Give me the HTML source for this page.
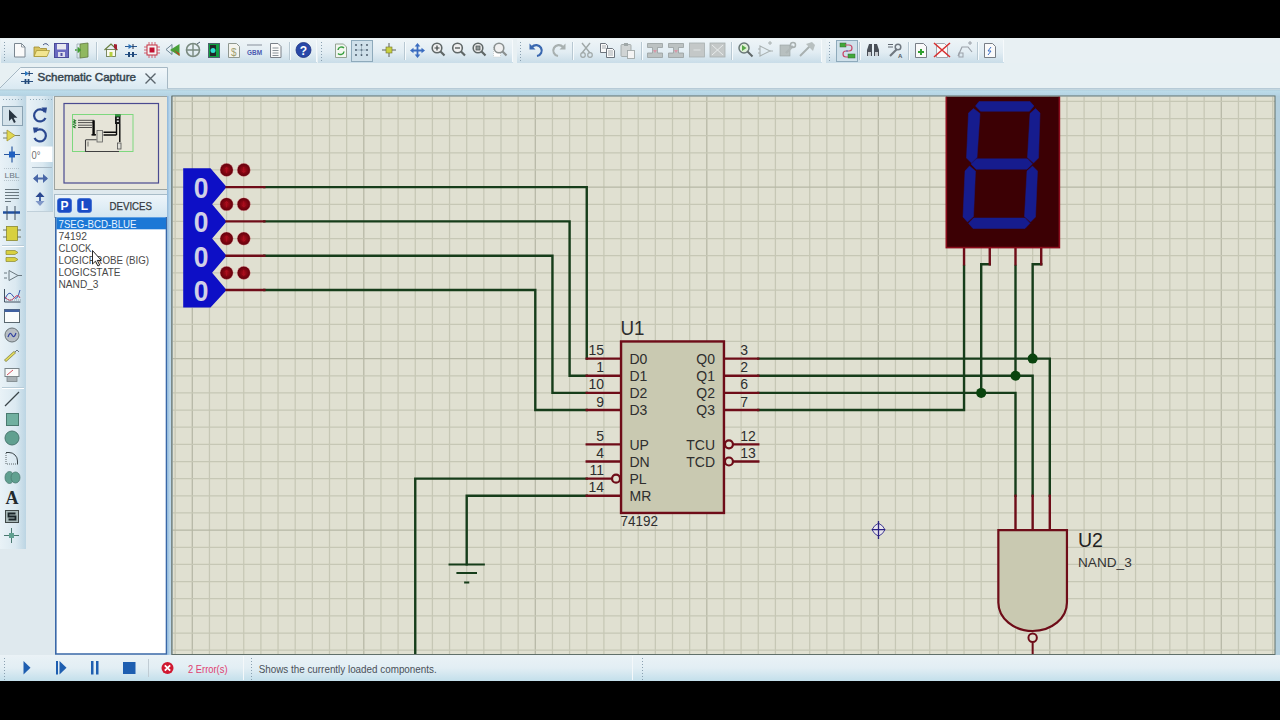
<!DOCTYPE html>
<html><head><meta charset="utf-8"><title>Schematic Capture</title>
<style>html,body{margin:0;padding:0;background:#000;overflow:hidden}svg text{font-family:"Liberation Sans",sans-serif}</style>
</head><body>
<svg width="1280" height="720" viewBox="0 0 1280 720" style="display:block">
<defs>
<linearGradient id="tbg" x1="0" y1="0" x2="0" y2="1"><stop offset="0" stop-color="#eef4f7"/><stop offset="0.55" stop-color="#e2edf3"/><stop offset="1" stop-color="#c9dde8"/></linearGradient>
<linearGradient id="tabg" x1="0" y1="0" x2="0" y2="1"><stop offset="0" stop-color="#f2f7fa"/><stop offset="1" stop-color="#d9e9f2"/></linearGradient>
<linearGradient id="col" x1="0" y1="0" x2="1" y2="0"><stop offset="0" stop-color="#e9f2f7"/><stop offset="0.6" stop-color="#dbe9f1"/><stop offset="1" stop-color="#bcd5e3"/></linearGradient>
<linearGradient id="sbg" x1="0" y1="0" x2="0" y2="1"><stop offset="0" stop-color="#eaf2f6"/><stop offset="0.5" stop-color="#e2eef4"/><stop offset="1" stop-color="#c3dfeb"/></linearGradient>
<linearGradient id="hdr" x1="0" y1="0" x2="0" y2="1"><stop offset="0" stop-color="#eef5fa"/><stop offset="1" stop-color="#d3e6f1"/></linearGradient>
<linearGradient id="vstrip" x1="0" y1="0" x2="1" y2="0"><stop offset="0" stop-color="#8fb6d8"/><stop offset="0.5" stop-color="#b8d6ec"/><stop offset="1" stop-color="#c4dce8"/></linearGradient>
<linearGradient id="band" x1="0" y1="0" x2="0" y2="1"><stop offset="0" stop-color="#9fbccb"/><stop offset="0.2" stop-color="#bcdcea"/><stop offset="1" stop-color="#b4d2e2"/></linearGradient>
<radialGradient id="dot" cx="0.5" cy="0.5" r="0.5"><stop offset="0" stop-color="#a80c1a"/><stop offset="0.6" stop-color="#7c0410"/><stop offset="1" stop-color="#60000c"/></radialGradient>
</defs>
<rect x="0" y="0" width="1280" height="720" fill="#000"/>
<rect x="0" y="38" width="1280" height="643" fill="#e7f0f3"/>
<rect x="0" y="38" width="1280" height="25" fill="#e8f0f3"/>
<rect x="1" y="39" width="316" height="24" fill="url(#tbg)"/>
<line x1="316.5" y1="40" x2="316.5" y2="62" stroke="#f6fafc" stroke-width="1"/>
<rect x="4" y="42" width="1" height="1" fill="#8aa0b0"/>
<rect x="4" y="45" width="1" height="1" fill="#8aa0b0"/>
<rect x="4" y="48" width="1" height="1" fill="#8aa0b0"/>
<rect x="4" y="51" width="1" height="1" fill="#8aa0b0"/>
<rect x="4" y="54" width="1" height="1" fill="#8aa0b0"/>
<rect x="4" y="57" width="1" height="1" fill="#8aa0b0"/>
<rect x="4" y="60" width="1" height="1" fill="#8aa0b0"/>
<rect x="318" y="39" width="195" height="24" fill="url(#tbg)"/>
<line x1="512.5" y1="40" x2="512.5" y2="62" stroke="#f6fafc" stroke-width="1"/>
<rect x="321" y="42" width="1" height="1" fill="#8aa0b0"/>
<rect x="321" y="45" width="1" height="1" fill="#8aa0b0"/>
<rect x="321" y="48" width="1" height="1" fill="#8aa0b0"/>
<rect x="321" y="51" width="1" height="1" fill="#8aa0b0"/>
<rect x="321" y="54" width="1" height="1" fill="#8aa0b0"/>
<rect x="321" y="57" width="1" height="1" fill="#8aa0b0"/>
<rect x="321" y="60" width="1" height="1" fill="#8aa0b0"/>
<rect x="517" y="39" width="305" height="24" fill="url(#tbg)"/>
<line x1="821.5" y1="40" x2="821.5" y2="62" stroke="#f6fafc" stroke-width="1"/>
<rect x="520" y="42" width="1" height="1" fill="#8aa0b0"/>
<rect x="520" y="45" width="1" height="1" fill="#8aa0b0"/>
<rect x="520" y="48" width="1" height="1" fill="#8aa0b0"/>
<rect x="520" y="51" width="1" height="1" fill="#8aa0b0"/>
<rect x="520" y="54" width="1" height="1" fill="#8aa0b0"/>
<rect x="520" y="57" width="1" height="1" fill="#8aa0b0"/>
<rect x="520" y="60" width="1" height="1" fill="#8aa0b0"/>
<rect x="826" y="39" width="178" height="24" fill="url(#tbg)"/>
<line x1="1003.5" y1="40" x2="1003.5" y2="62" stroke="#f6fafc" stroke-width="1"/>
<rect x="829" y="42" width="1" height="1" fill="#8aa0b0"/>
<rect x="829" y="45" width="1" height="1" fill="#8aa0b0"/>
<rect x="829" y="48" width="1" height="1" fill="#8aa0b0"/>
<rect x="829" y="51" width="1" height="1" fill="#8aa0b0"/>
<rect x="829" y="54" width="1" height="1" fill="#8aa0b0"/>
<rect x="829" y="57" width="1" height="1" fill="#8aa0b0"/>
<rect x="829" y="60" width="1" height="1" fill="#8aa0b0"/>
<line x1="96.5" y1="42" x2="96.5" y2="60" stroke="#b8c8d2" stroke-width="1"/>
<line x1="97.5" y1="42" x2="97.5" y2="60" stroke="#f6fbfd" stroke-width="1"/>
<line x1="289.5" y1="42" x2="289.5" y2="60" stroke="#b8c8d2" stroke-width="1"/>
<line x1="290.5" y1="42" x2="290.5" y2="60" stroke="#f6fbfd" stroke-width="1"/>
<line x1="404.5" y1="42" x2="404.5" y2="60" stroke="#b8c8d2" stroke-width="1"/>
<line x1="405.5" y1="42" x2="405.5" y2="60" stroke="#f6fbfd" stroke-width="1"/>
<line x1="572.5" y1="42" x2="572.5" y2="60" stroke="#b8c8d2" stroke-width="1"/>
<line x1="573.5" y1="42" x2="573.5" y2="60" stroke="#f6fbfd" stroke-width="1"/>
<line x1="641.5" y1="42" x2="641.5" y2="60" stroke="#b8c8d2" stroke-width="1"/>
<line x1="642.5" y1="42" x2="642.5" y2="60" stroke="#f6fbfd" stroke-width="1"/>
<line x1="731.5" y1="42" x2="731.5" y2="60" stroke="#b8c8d2" stroke-width="1"/>
<line x1="732.5" y1="42" x2="732.5" y2="60" stroke="#f6fbfd" stroke-width="1"/>
<line x1="859.5" y1="42" x2="859.5" y2="60" stroke="#b8c8d2" stroke-width="1"/>
<line x1="860.5" y1="42" x2="860.5" y2="60" stroke="#f6fbfd" stroke-width="1"/>
<line x1="908.5" y1="42" x2="908.5" y2="60" stroke="#b8c8d2" stroke-width="1"/>
<line x1="909.5" y1="42" x2="909.5" y2="60" stroke="#f6fbfd" stroke-width="1"/>
<line x1="977.5" y1="42" x2="977.5" y2="60" stroke="#b8c8d2" stroke-width="1"/>
<line x1="978.5" y1="42" x2="978.5" y2="60" stroke="#f6fbfd" stroke-width="1"/>
<path d="M14.5,43.5 h7 l3.5,3.5 v10 h-10.5z" fill="#fafafa" stroke="#7a8690" stroke-width="1"/>
<path d="M21.5,43.5 v3.5 h3.5" fill="none" stroke="#7a8690" stroke-width="0.8"/>
<path d="M34,47 h5 l1.5,1.5 h6 v8 h-12.5z" fill="#d8c460" stroke="#a08a30" stroke-width="0.8"/>
<path d="M34,56.5 l2.5,-6 h13 l-2.5,6z" fill="#f2e590" stroke="#a89838" stroke-width="0.8"/>
<path d="M43,45 q3,-3 5.5,0.5" fill="none" stroke="#405080" stroke-width="1"/>
<rect x="54.5" y="43.5" width="14" height="14" fill="#6a6ac0" stroke="#4a4a98" stroke-width="1"/>
<rect x="57" y="44" width="9" height="5.5" fill="#e8e8f0"/>
<rect x="58" y="52" width="7" height="5" fill="#dcdcec"/><rect x="60.5" y="53" width="2" height="3" fill="#5050a0"/>
<path d="M80,44 l8,-1 v14 l-8,1z" fill="#90b860" stroke="#607840" stroke-width="0.8"/>
<path d="M75,50 h5 m-2.5,-2.5 l2.5,2.5 l-2.5,2.5" fill="none" stroke="#40a030" stroke-width="1.6"/>
<path d="M80,44 h-3 v14 h3" fill="none" stroke="#9aa8b0" stroke-width="0.8"/>
<path d="M104.5,50 l6.5,-6 l6.5,6" fill="none" stroke="#6a8040" stroke-width="1.2"/>
<rect x="106.5" y="49.5" width="9" height="7" fill="#fafaf0" stroke="#607040" stroke-width="0.8"/>
<rect x="109.5" y="52" width="3" height="4.5" fill="#b8d040"/>
<path d="M114,44 v4 l3,2.5 v-6z" fill="#a02030"/>
<path d="M125,46.5 h12 M125,54.5 h12" stroke="#2a5890" stroke-width="1"/>
<path d="M128.5,44 v5 l4,-2.5z" fill="#2a70b8"/><path d="M133,44 v5" stroke="#203050" stroke-width="1"/>
<path d="M129,52 v5 M133,52 v5" stroke="#204878" stroke-width="2"/>
<rect x="147" y="45" width="10" height="10" fill="#f4f4f4" stroke="#c03040" stroke-width="1"/>
<rect x="149.5" y="47.5" width="5" height="5" fill="#c01030"/>
<path d="M144,47 h3 M144,50 h3 M144,53 h3 M157,47 h3 M157,50 h3 M157,53 h3 M149,42 v3 M152,42 v3 M155,42 v3 M149,55 v3 M152,55 v3 M155,55 v3" stroke="#d04050" stroke-width="0.8"/>
<path d="M166,49.5 l6,-5 v10z" fill="none" stroke="#607888" stroke-width="0.9"/>
<path d="M170,50 l9.5,-6 v12z" fill="#48a038"/><path d="M174,50 l5.5,3.5 v2.5z" fill="#c83a20"/>
<circle cx="193" cy="50" r="6.5" fill="none" stroke="#7a8a80" stroke-width="1.6"/>
<path d="M186,50 h14 M193,43 v14" stroke="#7a8a80" stroke-width="1.4"/>
<path d="M197,44 l3,-2" stroke="#506070" stroke-width="1"/>
<rect x="208.5" y="43.5" width="11" height="14" fill="#10a040" stroke="#506070" stroke-width="1"/>
<rect x="210" y="45" width="6" height="11" fill="#202828"/><circle cx="213" cy="50.5" r="2.5" fill="#30e0d0"/>
<path d="M228.5,43.5 h8 l3,3 v11 h-11z" fill="#f4f4ee" stroke="#909890" stroke-width="1"/>
<text x="231" y="55.5" font-size="10" fill="#a0a070" text-anchor="start" font-weight="normal" >$</text>
<rect x="247" y="44" width="15" height="2" fill="#b8c0c8"/>
<text x="247" y="55" font-size="6.5" fill="#4a5ab0" text-anchor="start" font-weight="bold" textLength="15" lengthAdjust="spacingAndGlyphs" >GBM</text>
<path d="M270.5,43.5 h7.5 l3,3 v11 h-10.5z" fill="#fafafa" stroke="#7a8088" stroke-width="1"/>
<path d="M272.5,48 h6 M272.5,50.5 h6 M272.5,53 h6 M272.5,55.5 h6" stroke="#707880" stroke-width="0.8"/>
<circle cx="303.5" cy="50" r="7.5" fill="#2848a8"/><circle cx="303.5" cy="50" r="7.5" fill="none" stroke="#1a3080" stroke-width="0.8"/>
<text x="303.5" y="54.5" font-size="12" fill="#ffffff" text-anchor="middle" font-weight="bold" >?</text>
<path d="M335.5,44 h8 l3,3 v10.5 h-11z" fill="#f2f6f0" stroke="#8a9a88" stroke-width="0.9"/>
<path d="M338,50 a3.5,3.5 0 0 1 6,-2 M344,51.5 a3.5,3.5 0 0 1 -6,2" fill="none" stroke="#38a040" stroke-width="1.5"/>
<rect x="351.5" y="40.5" width="21" height="21" fill="#cfe0ea" stroke="#8eaabb" stroke-width="1"/>
<circle cx="356" cy="45" r="0.9" fill="#405060"/>
<circle cx="361.5" cy="45" r="0.9" fill="#405060"/>
<circle cx="367" cy="45" r="0.9" fill="#405060"/>
<circle cx="356" cy="50" r="0.9" fill="#405060"/>
<circle cx="361.5" cy="50" r="0.9" fill="#405060"/>
<circle cx="367" cy="50" r="0.9" fill="#405060"/>
<circle cx="356" cy="55" r="0.9" fill="#405060"/>
<circle cx="361.5" cy="55" r="0.9" fill="#405060"/>
<circle cx="367" cy="55" r="0.9" fill="#405060"/>
<path d="M356,50 h11 M361.5,45 v10" stroke="#7890a0" stroke-width="0.5"/>
<path d="M382,50 h14 M389,43 v14" stroke="#505040" stroke-width="0.9"/><rect x="386" y="47" width="6" height="6" fill="#c8d040" stroke="#707030" stroke-width="0.6"/>
<path d="M417.5,46 v9 M413,50.5 h9" stroke="#3a6cc0" stroke-width="1.8"/><path d="M417.5,43 l-2.8,3.5 h5.6z M417.5,58 l-2.8,-3.5 h5.6z M410,50.5 l3.5,-2.8 v5.6z M425,50.5 l-3.5,-2.8 v5.6z" fill="#3a6cc0"/>
<circle cx="437" cy="48" r="4.8" fill="#f0f0f0" stroke="#606868" stroke-width="1.6"/>
<path d="M440.3,51.3 l4.2,4.2" stroke="#606868" stroke-width="2.2"/>
<path d="M434.5,48 h5 M437,45.5 v5" stroke="#404848" stroke-width="1.2"/>
<circle cx="457.5" cy="48" r="4.8" fill="#f0f0f0" stroke="#606868" stroke-width="1.6"/>
<path d="M460.8,51.3 l4.2,4.2" stroke="#606868" stroke-width="2.2"/>
<path d="M455.0,48 h5" stroke="#404848" stroke-width="1.2"/>
<circle cx="478" cy="48" r="4.8" fill="#f0f0f0" stroke="#606868" stroke-width="1.6"/>
<path d="M481.3,51.3 l4.2,4.2" stroke="#606868" stroke-width="2.2"/>
<rect x="476" y="46" width="4" height="4" fill="#909898" stroke="#505858" stroke-width="0.8"/>
<rect x="493.5" y="46" width="7" height="11" fill="#ffffff" stroke="#c0c8c8" stroke-dasharray="1,1" stroke-width="0.8"/>
<circle cx="499" cy="48" r="4.8" fill="#f0f0f0" stroke="#8a9090" stroke-width="1.6"/>
<path d="M502.3,51.3 l4.2,4.2" stroke="#8a9090" stroke-width="2.2"/>
<path d="M532,47 a5.5,5.5 0 1 1 5,9" fill="none" stroke="#3a68b0" stroke-width="2.2"/><path d="M529.5,43.5 v6 h6z" fill="#3a68b0"/>
<path d="M563,47 a5.5,5.5 0 1 0 -5,9" fill="none" stroke="#a8b0b0" stroke-width="2.2"/><path d="M565.5,43.5 v6 h-6z" fill="#a8b0b0"/>
<path d="M582,43 l8,10 M590,43 l-8,10" stroke="#a0a8a8" stroke-width="1.4"/><circle cx="583" cy="55" r="2.3" fill="none" stroke="#a0a8a8" stroke-width="1.2"/><circle cx="590" cy="55" r="2.3" fill="none" stroke="#a0a8a8" stroke-width="1.2"/>
<path d="M600.5,43.5 h5 l2,2 v7 h-7z" fill="#fafafa" stroke="#606870" stroke-width="0.9"/><path d="M606.5,48.5 h6 l2,2 v7 h-8z" fill="#fafafa" stroke="#606870" stroke-width="0.9"/>
<path d="M608,51 h5 M608,53 h5 M608,55 h5 M602,46 h4 M602,48 h4" stroke="#707880" stroke-width="0.6"/>
<rect x="621" y="44.5" width="10" height="12" rx="1" fill="#d0d4d4" stroke="#a0a8a8" stroke-width="0.9"/><rect x="624" y="43" width="4" height="3" fill="#a0a8a8"/><rect x="627.5" y="50.5" width="7" height="8" fill="#f4f4f4" stroke="#a0a8a8" stroke-width="0.9"/>
<path d="M647.5,43.5 h15 v4 h-5 v5.5 h5 v4.5 h-15 v-4.5 h5 v-5.5 h-5z" fill="#bcc2c2" stroke="#98a0a0" stroke-width="0.8"/>
<path d="M653.0,50 l2,3 l2,-3z" fill="#d898a8"/>
<path d="M668.5,43.5 h15 v4 h-5 v5.5 h5 v4.5 h-15 v-4.5 h5 v-5.5 h-5z" fill="#bcc2c2" stroke="#98a0a0" stroke-width="0.8"/>
<path d="M674.0,50 l2,3 l2,-3z" fill="#d898a8"/>
<rect x="689.5" y="43" width="15" height="14" fill="#c4c8c8" stroke="#a8b0b0" stroke-width="0.8"/><path d="M693.5,50 h7" stroke="#e0e4e4" stroke-width="1"/>
<rect x="710" y="43" width="15" height="14" fill="#c4c8c8" stroke="#a8b0b0" stroke-width="0.8"/><path d="M712,45 l11,10 M723,45 l-11,10" stroke="#e8ecec" stroke-width="1"/>
<circle cx="744" cy="48" r="5" fill="#e0f0d8" stroke="#6a7878" stroke-width="1.5"/><path d="M742,45 l4.5,3 l-4.5,3z" fill="#58a848"/><path d="M747.5,51.5 l5,5" stroke="#606868" stroke-width="2"/>
<path d="M760,46 l10,5 l-10,5z" fill="none" stroke="#a8b0b0" stroke-width="1.1"/><path d="M758,49 h2 M758,53 h2 M770,51 h3 M768,43 h4 M770,41 v4" stroke="#a8b0b0" stroke-width="1"/>
<rect x="780" y="45" width="10" height="11" fill="#b8c0c0" stroke="#98a0a0" stroke-width="0.6"/><path d="M786,53 l7,-7" stroke="#b0b8b8" stroke-width="2.4"/><circle cx="793" cy="45" r="2.5" fill="none" stroke="#a8b0b0" stroke-width="1.5"/>
<path d="M800,56 l10,-10" stroke="#a8b0b0" stroke-width="2"/><path d="M806,44 l6,-2 l3,3 l-2,6z" fill="#b8c0c0"/>
<rect x="836.5" y="40.5" width="21" height="21" fill="#cfe0ea" stroke="#8eaabb" stroke-width="1"/>
<rect x="840" y="43" width="6" height="4" fill="#40a838" stroke="#306830" stroke-width="0.5"/><rect x="848" y="54" width="7" height="4" fill="#40a838" stroke="#306830" stroke-width="0.5"/>
<path d="M845,45 h4 a3,3 0 0 1 0,6 h-3 a3,3 0 0 0 0,6 h2" fill="none" stroke="#c84868" stroke-width="1.2"/><path d="M846,51 h2" stroke="#5a68b8" stroke-width="1.2"/>
<path d="M867,56 v-6 l2,-6 h3 v12z M874,56 v-12 h3 l2,6 v6z" fill="#4a5058"/><rect x="868" y="52" width="3" height="4" fill="#c8ccd0"/><rect x="875" y="52" width="3" height="4" fill="#c8ccd0"/>
<path d="M888,44.5 h5 M888,47 h5" stroke="#606870" stroke-width="1"/><path d="M890,56 l7,-7" stroke="#707880" stroke-width="2.2"/><circle cx="898" cy="47" r="2.8" fill="none" stroke="#707880" stroke-width="1.5"/>
<text x="898" y="57.5" font-size="6" fill="#505860" text-anchor="start" font-weight="bold" >A</text>
<path d="M915.5,43.5 h8 l3,3 v11 h-11z" fill="#fafafa" stroke="#6a7078" stroke-width="0.9"/><path d="M918,52 h6 M921,49 v6" stroke="#30a030" stroke-width="2"/>
<path d="M936.5,43.5 h8 l3,3 v11 h-11z" fill="#fafafa" stroke="#9aa0a8" stroke-width="0.9"/><path d="M934,43 l16,14 M950,43 l-16,14" stroke="#d83030" stroke-width="1.6"/>
<path d="M958,56 l4,-9 h6 l4,5" fill="none" stroke="#9aa0a8" stroke-width="1.2"/><rect x="959" y="53" width="4" height="4" fill="none" stroke="#9aa0a8"/><path d="M968,43 h4 M970,41 v4" stroke="#9aa0a8" stroke-width="1"/>
<path d="M984.5,43.5 h8 l3,3 v11 h-11z" fill="#fafafa" stroke="#6a7078" stroke-width="0.9"/><path d="M991,47 l-3,4 h3 l-3,4" fill="none" stroke="#3a70c8" stroke-width="1"/>
<rect x="0" y="63" width="1280" height="27" fill="#e7f0f3"/>
<path d="M0,88.5 L20.5,67.5 H167.5 V89 H0z" fill="url(#tabg)"/>
<path d="M0,88 L20.5,67.5 H167.5 V89" fill="none" stroke="#a6b8c4" stroke-width="1"/>
<path d="M167.5,88.5 H1280" stroke="#b6cad6" stroke-width="1"/>
<path d="M21,73.5 h12 M21,81.5 h12" stroke="#2a5080" stroke-width="1"/>
<path d="M25,71 v5 l4,-2.5z" fill="#2a78c0"/><path d="M29.2,71 v5" stroke="#203050" stroke-width="1"/>
<path d="M25.5,79 v5 M28.5,79 v5" stroke="#204878" stroke-width="1.8"/>
<text x="37.5" y="81.4" font-size="11.3" fill="#36444e" text-anchor="start" font-weight="normal" textLength="98.5" lengthAdjust="spacingAndGlyphs" stroke="#36444e" stroke-width="0.45">Schematic Capture</text>
<path d="M145.5,73.5 l10,10 M155.5,73.5 l-10,10" stroke="#5a646c" stroke-width="1.4"/>
<rect x="0" y="89.5" width="1280" height="6.5" fill="url(#band)"/>
<rect x="0" y="96" width="172" height="559" fill="#dfe9ee"/>
<rect x="0" y="96" width="26" height="453" fill="url(#col)"/>
<rect x="27" y="96" width="26" height="115" fill="url(#col)"/>
<line x1="27" y1="211.5" x2="53" y2="211.5" stroke="#c0d0da" stroke-width="1"/>
<rect x="3" y="99" width="1" height="1" fill="#90a8b8"/>
<rect x="6" y="99" width="1" height="1" fill="#90a8b8"/>
<rect x="9" y="99" width="1" height="1" fill="#90a8b8"/>
<rect x="12" y="99" width="1" height="1" fill="#90a8b8"/>
<rect x="15" y="99" width="1" height="1" fill="#90a8b8"/>
<rect x="18" y="99" width="1" height="1" fill="#90a8b8"/>
<rect x="21" y="99" width="1" height="1" fill="#90a8b8"/>
<rect x="30" y="99" width="1" height="1" fill="#90a8b8"/>
<rect x="33" y="99" width="1" height="1" fill="#90a8b8"/>
<rect x="36" y="99" width="1" height="1" fill="#90a8b8"/>
<rect x="39" y="99" width="1" height="1" fill="#90a8b8"/>
<rect x="42" y="99" width="1" height="1" fill="#90a8b8"/>
<rect x="45" y="99" width="1" height="1" fill="#90a8b8"/>
<rect x="48" y="99" width="1" height="1" fill="#90a8b8"/>
<rect x="51" y="99" width="1" height="1" fill="#90a8b8"/>
<rect x="2.5" y="106.5" width="20" height="19" fill="#d4e2ea" stroke="#8aa2b2" stroke-width="1"/>
<path d="M9,109.5 v11.5 l2.8,-2.6 l2.2,4.6 l1.8,-0.9 l-2.2,-4.4 h3.8z" fill="#283440"/>
<path d="M7,130 v11 l8,-5.5z" fill="#e0d850" stroke="#a89830" stroke-width="0.8"/><path d="M3,133 h4 M3,138 h4 M15,135.5 h5" stroke="#707860" stroke-width="0.9"/>
<path d="M4,154.5 h16 M12,146.5 v16" stroke="#2a58a0" stroke-width="1.2"/><rect x="9" y="151.5" width="6" height="6" fill="#2060c0"/>
<text x="4.5" y="178" font-size="8" fill="#6a7680" text-anchor="start" font-weight="normal" textLength="15" lengthAdjust="spacingAndGlyphs" >LBL</text>
<path d="M4,168.5 h16 M4,180.5 h16" stroke="#9aa8b0" stroke-width="0.6" stroke-dasharray="1,1"/>
<path d="M5,189.5 h14 M5,192.5 h14 M5,195.5 h14 M5,198.5 h14 M5,201.5 h6" stroke="#6a7880" stroke-width="1"/>
<path d="M3,212.5 h17" stroke="#2050a0" stroke-width="2.5"/><path d="M7,206 v14 M15,206 v14" stroke="#405060" stroke-width="1"/>
<rect x="6.5" y="226.5" width="11" height="14" fill="#d8d040" stroke="#8a8830" stroke-width="0.8"/><path d="M3,230 h3.5 M3,237 h3.5 M17.5,230 h3.5 M17.5,237 h3.5" stroke="#606850" stroke-width="0.9"/>
<line x1="2" y1="246.5" x2="24" y2="246.5" stroke="#ffffff" stroke-width="1"/><line x1="2" y1="245.5" x2="24" y2="245.5" stroke="#b8ccd8" stroke-width="1"/>
<path d="M6,250.5 h9 l3,2 l-3,2 h-9z M6,257.5 h9 l3,2 l-3,2 h-9z" fill="#d8d040" stroke="#8a8830" stroke-width="0.7"/>
<path d="M9,270.5 l9,5 l-9,5z" fill="none" stroke="#6a7880" stroke-width="1"/><path d="M4,273 h3 M4,278 h3 M18,275.5 h4" stroke="#6a7880" stroke-width="1"/>
<path d="M4.5,289 v13 h16" fill="none" stroke="#405060" stroke-width="1"/><path d="M5,299 q4,-10 8,-3 t7,-6" fill="none" stroke="#3a5ab0" stroke-width="1"/><path d="M5,297 q5,6 9,1 t6,0" fill="none" stroke="#c84060" stroke-width="1"/>
<path d="M4,300 h17" stroke="#6a7880" stroke-width="0.6" stroke-dasharray="1,1"/>
<rect x="4.5" y="309.5" width="15" height="13" fill="#fafcfc" stroke="#5a6870" stroke-width="1"/><rect x="4.5" y="309.5" width="15" height="2.5" fill="#4060a0"/>
<circle cx="12" cy="335" r="7" fill="#b8bec4" stroke="#6a7478" stroke-width="1"/><path d="M8,337 q2,-6 4,-2 t4,-2" fill="none" stroke="#3040a0" stroke-width="1.2"/>
<path d="M5,361 l10,-9" stroke="#888848" stroke-width="3"/><path d="M5.5,360.5 l9,-8" stroke="#e8e060" stroke-width="1.6"/><path d="M15,352 l2,-2 l2,2" fill="none" stroke="#505a60" stroke-width="0.8"/>
<rect x="5" y="368.5" width="14" height="8" fill="#f8fafa" stroke="#7a8488" stroke-width="1"/><path d="M7,375 l6,-5" stroke="#d04050" stroke-width="0.9"/><rect x="7" y="376.5" width="10" height="5" fill="#a8b0b4" stroke="#7a8488" stroke-width="0.8"/>
<line x1="2" y1="387.5" x2="24" y2="387.5" stroke="#b8ccd8" stroke-width="1"/><line x1="2" y1="388.5" x2="24" y2="388.5" stroke="#ffffff" stroke-width="1"/>
<path d="M5,406 l14,-14" stroke="#3a4448" stroke-width="1.2"/>
<rect x="6.5" y="413.5" width="12" height="12" fill="#70b0a0" stroke="#4a7a70" stroke-width="1"/>
<circle cx="12" cy="438" r="7" fill="#60a090" stroke="#4a7870" stroke-width="1"/>
<path d="M6,452.5 h3 a8.5,8.5 0 0 1 8.5,8.5 v3.5" fill="none" stroke="#3a4448" stroke-width="1"/><path d="M6,453 v11 h11" fill="none" stroke="#3a4448" stroke-width="0.8" stroke-dasharray="1,1"/>
<ellipse cx="9.5" cy="477.5" rx="4.5" ry="6" fill="#60a090" stroke="#4a7870" stroke-width="0.8"/><ellipse cx="15.5" cy="477.5" rx="4.5" ry="5.5" fill="#60a090" stroke="#4a7870" stroke-width="0.8"/>
<text x="12" y="503.5" font-size="18" fill="#222a2e" text-anchor="middle" font-weight="bold" style="font-family:'Liberation Serif',serif">A</text>
<rect x="5.5" y="510.5" width="13" height="12" fill="#a8b8b8" stroke="#404848" stroke-width="1"/>
<path d="M15.5,513.5 h-7 v3 h7 v3 h-7" fill="none" stroke="#1a2428" stroke-width="1.8"/>
<path d="M4,535.5 h15 M11.5,528 v15" stroke="#4a7870" stroke-width="1"/><rect x="9" y="533" width="5" height="5" fill="#60a090"/>
<path d="M45,112 a6,6 0 1 0 0.5,6" fill="none" stroke="#2a4890" stroke-width="2.2"/><path d="M41.5,107.5 l5.5,0 l-1,6z" fill="#2a4890"/>
<path d="M35,132 a6,6 0 1 1 -0.5,6" fill="none" stroke="#2a4890" stroke-width="2.2"/><path d="M38.5,127.5 l-5.5,0 l1,6z" fill="#2a4890"/>
<rect x="31" y="146.5" width="21.5" height="15.5" fill="#ffffff"/>
<text x="31.5" y="159" font-size="11" fill="#707070" text-anchor="start" font-weight="normal" textLength="9" lengthAdjust="spacingAndGlyphs" >0°</text>
<line x1="32" y1="167.5" x2="52" y2="167.5" stroke="#a8b8c4" stroke-width="1"/>
<path d="M34,178.5 h13" stroke="#4a68a8" stroke-width="2"/><path d="M33,178.5 l5,-4.5 v9z M48,178.5 l-5,-4.5 v9z" fill="#4a68a8"/>
<path d="M40,194 v10" stroke="#4a68a8" stroke-width="2"/><path d="M40,192 l-4.5,5 h9z" fill="#2a4890"/><path d="M40,206 l-4.5,-5 h9z" fill="#8098c8"/>
<rect x="54.5" y="96.5" width="113" height="93" fill="#e9e7dc" stroke="#9ea4a0" stroke-width="1"/>
<rect x="64" y="103.5" width="94.5" height="79.5" fill="#e6e4d8" stroke="#4a4a90" stroke-width="1.2"/>
<rect x="72.5" y="114.5" width="60.5" height="37" fill="none" stroke="#7ed87e" stroke-width="1"/>
<path d="M73.5,119.5 l2,1.2 l-2,1.2 l2,1.2 l-2,1.2 l2,1.2 l-2,1.2 l2,1.2" fill="none" stroke="#2a7a30" stroke-width="1.2"/>
<path d="M78,120.3 h16 M78,122.6 h15 M78,125.2 h14 M78,127.5 h14" stroke="#404040" stroke-width="0.9"/>
<path d="M93.6,120.3 v15" stroke="#080808" stroke-width="2.4"/><path d="M91.5,134.8 h4.5" stroke="#101010" stroke-width="1.5"/>
<rect x="97" y="130.5" width="5.5" height="11.5" fill="#dcdcd0" stroke="#606060" stroke-width="0.8"/>
<path d="M103.5,132.3 h13 M103.5,135 h13" stroke="#080808" stroke-width="1.5"/>
<rect x="115" y="114.5" width="5.5" height="9.5" fill="#181818"/><rect x="115" y="114.5" width="5.5" height="2" fill="#30a040"/><rect x="116.8" y="117.5" width="2" height="1.5" fill="#e0e0e0"/><rect x="116.8" y="120.5" width="2" height="1.5" fill="#e0e0e0"/>
<path d="M116.5,124 v11 M119.8,124 v12 M119.8,136 v6" stroke="#080808" stroke-width="1.4"/>
<rect x="117.5" y="143" width="3.5" height="6" fill="#e0e0d8" stroke="#505050" stroke-width="0.8"/>
<path d="M85.5,140 v11.5 h33.5 M85.5,139.7 h11" fill="none" stroke="#404040" stroke-width="1.1"/><path d="M88,141.5 v5" stroke="#505050" stroke-width="0.8"/>
<rect x="54.5" y="194.5" width="113" height="23" fill="url(#hdr)" stroke="#a8bcc8" stroke-width="1"/>
<rect x="57.5" y="198.5" width="14" height="14" rx="2.5" fill="#1a4cc6" stroke="#3a6ad0" stroke-width="0.8"/>
<text x="64.5" y="210" font-size="12" fill="#ffffff" text-anchor="middle" font-weight="bold" >P</text>
<rect x="77.5" y="198.5" width="14" height="14" rx="2.5" fill="#1a4cc6" stroke="#3a6ad0" stroke-width="0.8"/>
<text x="84.5" y="210" font-size="12" fill="#ffffff" text-anchor="middle" font-weight="bold" >L</text>
<text x="109.5" y="210" font-size="11" fill="#343a40" text-anchor="start" font-weight="normal" textLength="42.5" lengthAdjust="spacingAndGlyphs" stroke="#343a40" stroke-width="0.25">DEVICES</text>
<rect x="55" y="217" width="112" height="437.5" fill="#ffffff"/>
<path d="M55.8,217 V654 H166.5 V217" fill="none" stroke="#3a68a8" stroke-width="1.6"/>
<rect x="56.5" y="217.3" width="109.5" height="12" fill="#1c78d6"/>
<text x="58.5" y="227.5" font-size="11" fill="#e8f4ff" text-anchor="start" font-weight="normal" textLength="78" lengthAdjust="spacingAndGlyphs" >7SEG-BCD-BLUE</text>
<text x="58.5" y="239.8" font-size="11" fill="#4a4a4a" text-anchor="start" font-weight="normal" textLength="28.5" lengthAdjust="spacingAndGlyphs" >74192</text>
<text x="58.5" y="251.9" font-size="11" fill="#4a4a4a" text-anchor="start" font-weight="normal" textLength="33" lengthAdjust="spacingAndGlyphs" >CLOCK</text>
<text x="58.5" y="264" font-size="11" fill="#4a4a4a" text-anchor="start" font-weight="normal" textLength="90.5" lengthAdjust="spacingAndGlyphs" >LOGICPROBE (BIG)</text>
<text x="58.5" y="276.1" font-size="11" fill="#4a4a4a" text-anchor="start" font-weight="normal" textLength="62" lengthAdjust="spacingAndGlyphs" >LOGICSTATE</text>
<text x="58.5" y="288.2" font-size="11" fill="#4a4a4a" text-anchor="start" font-weight="normal" textLength="40" lengthAdjust="spacingAndGlyphs" >NAND_3</text>
<path d="M92.5,250.5 v13.5 l3,-2.8 l2.4,4.8 l1.8,-0.9 l-2.4,-4.7 h4z" fill="#ffffff" stroke="#101010" stroke-width="0.9"/>
<rect x="167" y="96" width="5.5" height="559" fill="url(#vstrip)"/>
<rect x="171" y="96" width="1.2" height="559" fill="#98a4a8"/>
<rect x="1275" y="96" width="5" height="559" fill="#b4d0de"/>
<svg x="172.5" y="96.5" width="1102.5" height="558.0" viewBox="172.5 96.5 1102.5 558.0" overflow="hidden">
<rect x="172.5" y="96.5" width="1102.5" height="558.0" fill="#e0e0d1"/>
<line x1="175.15" y1="96.5" x2="175.15" y2="654.5" stroke="#c6c7b5" stroke-width="1.25"/>
<line x1="192.3" y1="96.5" x2="192.3" y2="654.5" stroke="#b6b7a5" stroke-width="1.25"/>
<line x1="209.45" y1="96.5" x2="209.45" y2="654.5" stroke="#c6c7b5" stroke-width="1.25"/>
<line x1="226.6" y1="96.5" x2="226.6" y2="654.5" stroke="#c6c7b5" stroke-width="1.25"/>
<line x1="243.75" y1="96.5" x2="243.75" y2="654.5" stroke="#c6c7b5" stroke-width="1.25"/>
<line x1="260.9" y1="96.5" x2="260.9" y2="654.5" stroke="#c6c7b5" stroke-width="1.25"/>
<line x1="278.05" y1="96.5" x2="278.05" y2="654.5" stroke="#c6c7b5" stroke-width="1.25"/>
<line x1="295.2" y1="96.5" x2="295.2" y2="654.5" stroke="#c6c7b5" stroke-width="1.25"/>
<line x1="312.35" y1="96.5" x2="312.35" y2="654.5" stroke="#c6c7b5" stroke-width="1.25"/>
<line x1="329.5" y1="96.5" x2="329.5" y2="654.5" stroke="#c6c7b5" stroke-width="1.25"/>
<line x1="346.65" y1="96.5" x2="346.65" y2="654.5" stroke="#c6c7b5" stroke-width="1.25"/>
<line x1="363.8" y1="96.5" x2="363.8" y2="654.5" stroke="#b6b7a5" stroke-width="1.25"/>
<line x1="380.95" y1="96.5" x2="380.95" y2="654.5" stroke="#c6c7b5" stroke-width="1.25"/>
<line x1="398.1" y1="96.5" x2="398.1" y2="654.5" stroke="#c6c7b5" stroke-width="1.25"/>
<line x1="415.25" y1="96.5" x2="415.25" y2="654.5" stroke="#c6c7b5" stroke-width="1.25"/>
<line x1="432.4" y1="96.5" x2="432.4" y2="654.5" stroke="#c6c7b5" stroke-width="1.25"/>
<line x1="449.55" y1="96.5" x2="449.55" y2="654.5" stroke="#c6c7b5" stroke-width="1.25"/>
<line x1="466.7" y1="96.5" x2="466.7" y2="654.5" stroke="#c6c7b5" stroke-width="1.25"/>
<line x1="483.85" y1="96.5" x2="483.85" y2="654.5" stroke="#c6c7b5" stroke-width="1.25"/>
<line x1="501" y1="96.5" x2="501" y2="654.5" stroke="#c6c7b5" stroke-width="1.25"/>
<line x1="518.15" y1="96.5" x2="518.15" y2="654.5" stroke="#c6c7b5" stroke-width="1.25"/>
<line x1="535.3" y1="96.5" x2="535.3" y2="654.5" stroke="#b6b7a5" stroke-width="1.25"/>
<line x1="552.45" y1="96.5" x2="552.45" y2="654.5" stroke="#c6c7b5" stroke-width="1.25"/>
<line x1="569.6" y1="96.5" x2="569.6" y2="654.5" stroke="#c6c7b5" stroke-width="1.25"/>
<line x1="586.75" y1="96.5" x2="586.75" y2="654.5" stroke="#c6c7b5" stroke-width="1.25"/>
<line x1="603.9" y1="96.5" x2="603.9" y2="654.5" stroke="#c6c7b5" stroke-width="1.25"/>
<line x1="621.05" y1="96.5" x2="621.05" y2="654.5" stroke="#c6c7b5" stroke-width="1.25"/>
<line x1="638.2" y1="96.5" x2="638.2" y2="654.5" stroke="#c6c7b5" stroke-width="1.25"/>
<line x1="655.35" y1="96.5" x2="655.35" y2="654.5" stroke="#c6c7b5" stroke-width="1.25"/>
<line x1="672.5" y1="96.5" x2="672.5" y2="654.5" stroke="#c6c7b5" stroke-width="1.25"/>
<line x1="689.65" y1="96.5" x2="689.65" y2="654.5" stroke="#c6c7b5" stroke-width="1.25"/>
<line x1="706.8" y1="96.5" x2="706.8" y2="654.5" stroke="#b6b7a5" stroke-width="1.25"/>
<line x1="723.95" y1="96.5" x2="723.95" y2="654.5" stroke="#c6c7b5" stroke-width="1.25"/>
<line x1="741.1" y1="96.5" x2="741.1" y2="654.5" stroke="#c6c7b5" stroke-width="1.25"/>
<line x1="758.25" y1="96.5" x2="758.25" y2="654.5" stroke="#c6c7b5" stroke-width="1.25"/>
<line x1="775.4" y1="96.5" x2="775.4" y2="654.5" stroke="#c6c7b5" stroke-width="1.25"/>
<line x1="792.55" y1="96.5" x2="792.55" y2="654.5" stroke="#c6c7b5" stroke-width="1.25"/>
<line x1="809.7" y1="96.5" x2="809.7" y2="654.5" stroke="#c6c7b5" stroke-width="1.25"/>
<line x1="826.85" y1="96.5" x2="826.85" y2="654.5" stroke="#c6c7b5" stroke-width="1.25"/>
<line x1="844" y1="96.5" x2="844" y2="654.5" stroke="#c6c7b5" stroke-width="1.25"/>
<line x1="861.15" y1="96.5" x2="861.15" y2="654.5" stroke="#c6c7b5" stroke-width="1.25"/>
<line x1="878.3" y1="96.5" x2="878.3" y2="654.5" stroke="#b6b7a5" stroke-width="1.25"/>
<line x1="895.45" y1="96.5" x2="895.45" y2="654.5" stroke="#c6c7b5" stroke-width="1.25"/>
<line x1="912.6" y1="96.5" x2="912.6" y2="654.5" stroke="#c6c7b5" stroke-width="1.25"/>
<line x1="929.75" y1="96.5" x2="929.75" y2="654.5" stroke="#c6c7b5" stroke-width="1.25"/>
<line x1="946.9" y1="96.5" x2="946.9" y2="654.5" stroke="#c6c7b5" stroke-width="1.25"/>
<line x1="964.05" y1="96.5" x2="964.05" y2="654.5" stroke="#c6c7b5" stroke-width="1.25"/>
<line x1="981.2" y1="96.5" x2="981.2" y2="654.5" stroke="#c6c7b5" stroke-width="1.25"/>
<line x1="998.35" y1="96.5" x2="998.35" y2="654.5" stroke="#c6c7b5" stroke-width="1.25"/>
<line x1="1015.5" y1="96.5" x2="1015.5" y2="654.5" stroke="#c6c7b5" stroke-width="1.25"/>
<line x1="1032.65" y1="96.5" x2="1032.65" y2="654.5" stroke="#c6c7b5" stroke-width="1.25"/>
<line x1="1049.8" y1="96.5" x2="1049.8" y2="654.5" stroke="#b6b7a5" stroke-width="1.25"/>
<line x1="1066.95" y1="96.5" x2="1066.95" y2="654.5" stroke="#c6c7b5" stroke-width="1.25"/>
<line x1="1084.1" y1="96.5" x2="1084.1" y2="654.5" stroke="#c6c7b5" stroke-width="1.25"/>
<line x1="1101.25" y1="96.5" x2="1101.25" y2="654.5" stroke="#c6c7b5" stroke-width="1.25"/>
<line x1="1118.4" y1="96.5" x2="1118.4" y2="654.5" stroke="#c6c7b5" stroke-width="1.25"/>
<line x1="1135.55" y1="96.5" x2="1135.55" y2="654.5" stroke="#c6c7b5" stroke-width="1.25"/>
<line x1="1152.7" y1="96.5" x2="1152.7" y2="654.5" stroke="#c6c7b5" stroke-width="1.25"/>
<line x1="1169.85" y1="96.5" x2="1169.85" y2="654.5" stroke="#c6c7b5" stroke-width="1.25"/>
<line x1="1187" y1="96.5" x2="1187" y2="654.5" stroke="#c6c7b5" stroke-width="1.25"/>
<line x1="1204.15" y1="96.5" x2="1204.15" y2="654.5" stroke="#c6c7b5" stroke-width="1.25"/>
<line x1="1221.3" y1="96.5" x2="1221.3" y2="654.5" stroke="#b6b7a5" stroke-width="1.25"/>
<line x1="1238.45" y1="96.5" x2="1238.45" y2="654.5" stroke="#c6c7b5" stroke-width="1.25"/>
<line x1="1255.6" y1="96.5" x2="1255.6" y2="654.5" stroke="#c6c7b5" stroke-width="1.25"/>
<line x1="1272.75" y1="96.5" x2="1272.75" y2="654.5" stroke="#c6c7b5" stroke-width="1.25"/>
<line x1="172.5" y1="101.35" x2="1275" y2="101.35" stroke="#c6c7b5" stroke-width="1.25"/>
<line x1="172.5" y1="118.5" x2="1275" y2="118.5" stroke="#c6c7b5" stroke-width="1.25"/>
<line x1="172.5" y1="135.65" x2="1275" y2="135.65" stroke="#c6c7b5" stroke-width="1.25"/>
<line x1="172.5" y1="152.8" x2="1275" y2="152.8" stroke="#c6c7b5" stroke-width="1.25"/>
<line x1="172.5" y1="169.95" x2="1275" y2="169.95" stroke="#c6c7b5" stroke-width="1.25"/>
<line x1="172.5" y1="187.1" x2="1275" y2="187.1" stroke="#b6b7a5" stroke-width="1.25"/>
<line x1="172.5" y1="204.25" x2="1275" y2="204.25" stroke="#c6c7b5" stroke-width="1.25"/>
<line x1="172.5" y1="221.4" x2="1275" y2="221.4" stroke="#c6c7b5" stroke-width="1.25"/>
<line x1="172.5" y1="238.55" x2="1275" y2="238.55" stroke="#c6c7b5" stroke-width="1.25"/>
<line x1="172.5" y1="255.7" x2="1275" y2="255.7" stroke="#c6c7b5" stroke-width="1.25"/>
<line x1="172.5" y1="272.85" x2="1275" y2="272.85" stroke="#c6c7b5" stroke-width="1.25"/>
<line x1="172.5" y1="290" x2="1275" y2="290" stroke="#c6c7b5" stroke-width="1.25"/>
<line x1="172.5" y1="307.15" x2="1275" y2="307.15" stroke="#c6c7b5" stroke-width="1.25"/>
<line x1="172.5" y1="324.3" x2="1275" y2="324.3" stroke="#c6c7b5" stroke-width="1.25"/>
<line x1="172.5" y1="341.45" x2="1275" y2="341.45" stroke="#c6c7b5" stroke-width="1.25"/>
<line x1="172.5" y1="358.6" x2="1275" y2="358.6" stroke="#b6b7a5" stroke-width="1.25"/>
<line x1="172.5" y1="375.75" x2="1275" y2="375.75" stroke="#c6c7b5" stroke-width="1.25"/>
<line x1="172.5" y1="392.9" x2="1275" y2="392.9" stroke="#c6c7b5" stroke-width="1.25"/>
<line x1="172.5" y1="410.05" x2="1275" y2="410.05" stroke="#c6c7b5" stroke-width="1.25"/>
<line x1="172.5" y1="427.2" x2="1275" y2="427.2" stroke="#c6c7b5" stroke-width="1.25"/>
<line x1="172.5" y1="444.35" x2="1275" y2="444.35" stroke="#c6c7b5" stroke-width="1.25"/>
<line x1="172.5" y1="461.5" x2="1275" y2="461.5" stroke="#c6c7b5" stroke-width="1.25"/>
<line x1="172.5" y1="478.65" x2="1275" y2="478.65" stroke="#c6c7b5" stroke-width="1.25"/>
<line x1="172.5" y1="495.8" x2="1275" y2="495.8" stroke="#c6c7b5" stroke-width="1.25"/>
<line x1="172.5" y1="512.95" x2="1275" y2="512.95" stroke="#c6c7b5" stroke-width="1.25"/>
<line x1="172.5" y1="530.1" x2="1275" y2="530.1" stroke="#b6b7a5" stroke-width="1.25"/>
<line x1="172.5" y1="547.25" x2="1275" y2="547.25" stroke="#c6c7b5" stroke-width="1.25"/>
<line x1="172.5" y1="564.4" x2="1275" y2="564.4" stroke="#c6c7b5" stroke-width="1.25"/>
<line x1="172.5" y1="581.55" x2="1275" y2="581.55" stroke="#c6c7b5" stroke-width="1.25"/>
<line x1="172.5" y1="598.7" x2="1275" y2="598.7" stroke="#c6c7b5" stroke-width="1.25"/>
<line x1="172.5" y1="615.85" x2="1275" y2="615.85" stroke="#c6c7b5" stroke-width="1.25"/>
<line x1="172.5" y1="633" x2="1275" y2="633" stroke="#c6c7b5" stroke-width="1.25"/>
<line x1="172.5" y1="650.15" x2="1275" y2="650.15" stroke="#c6c7b5" stroke-width="1.25"/>
<path d="M264.33,187.1 L586.75,187.1 L586.75,358.6" fill="none" stroke="#163d1a" stroke-width="2.4" stroke-linejoin="miter" stroke-linecap="square"/>
<path d="M264.33,221.4 L569.6,221.4 L569.6,375.75 L586.75,375.75" fill="none" stroke="#163d1a" stroke-width="2.4" stroke-linejoin="miter" stroke-linecap="square"/>
<path d="M264.33,255.7 L552.45,255.7 L552.45,392.9 L586.75,392.9" fill="none" stroke="#163d1a" stroke-width="2.4" stroke-linejoin="miter" stroke-linecap="square"/>
<path d="M264.33,290 L535.3,290 L535.3,410.05 L586.75,410.05" fill="none" stroke="#163d1a" stroke-width="2.4" stroke-linejoin="miter" stroke-linecap="square"/>
<path d="M586.75,478.65 L415.25,478.65 L415.25,659.5" fill="none" stroke="#163d1a" stroke-width="2.4" stroke-linejoin="miter" stroke-linecap="square"/>
<path d="M586.75,495.8 L466.7,495.8 L466.7,564.4" fill="none" stroke="#163d1a" stroke-width="2.4" stroke-linejoin="miter" stroke-linecap="square"/>
<path d="M448.55,564.4 H484.85 M456.41,572.97 H476.99 M464.13,582.41 H469.27" stroke="#163d1a" stroke-width="2"/>
<path d="M758.25,358.6 L1049.8,358.6 L1049.8,495.8" fill="none" stroke="#163d1a" stroke-width="2.4" stroke-linejoin="miter" stroke-linecap="square"/>
<path d="M758.25,375.75 L1032.65,375.75 L1032.65,495.8" fill="none" stroke="#163d1a" stroke-width="2.4" stroke-linejoin="miter" stroke-linecap="square"/>
<path d="M758.25,392.9 L1015.5,392.9 L1015.5,495.8" fill="none" stroke="#163d1a" stroke-width="2.4" stroke-linejoin="miter" stroke-linecap="square"/>
<path d="M758.25,410.05 L964.05,410.05 L964.05,265.99" fill="none" stroke="#163d1a" stroke-width="2.4" stroke-linejoin="miter" stroke-linecap="square"/>
<path d="M981.2,392.9 L981.2,264.27 L989.77,264.27" fill="none" stroke="#163d1a" stroke-width="2.4" stroke-linejoin="miter" stroke-linecap="square"/>
<path d="M1015.5,375.75 L1015.5,265.99" fill="none" stroke="#163d1a" stroke-width="2.4" stroke-linejoin="miter" stroke-linecap="square"/>
<path d="M1032.65,358.6 L1032.65,264.27 L1041.22,264.27" fill="none" stroke="#163d1a" stroke-width="2.4" stroke-linejoin="miter" stroke-linecap="square"/>
<circle cx="1032.65" cy="358.6" r="5" fill="#0a440e"/>
<circle cx="1015.5" cy="375.75" r="5" fill="#0a440e"/>
<circle cx="981.2" cy="392.9" r="5" fill="#0a440e"/>
<path d="M183.2,168.2 L210.5,168.2 L226.6,187.1 L212.1,204.25 L226.6,221.4 L212.1,238.55 L226.6,255.7 L212.1,272.85 L226.6,290 L210.5,307.5 L183.2,307.5z" fill="#0d0fc6"/>
<text transform="translate(201,198.1) scale(0.88,1)" x="0" y="0" font-size="30" font-weight="bold" fill="#d0d0e6" text-anchor="middle">0</text>
<path d="M226.6,187.1 L264.33,187.1" fill="none" stroke="#6e0c18" stroke-width="2.4" stroke-linejoin="miter" stroke-linecap="square"/>
<circle cx="226.6" cy="169.95" r="6.6" fill="url(#dot)" stroke="#ffb0b0" stroke-width="0.6" stroke-opacity="0.6"/>
<circle cx="243.75" cy="169.95" r="6.6" fill="url(#dot)" stroke="#ffb0b0" stroke-width="0.6" stroke-opacity="0.6"/>
<path d="M226.6,172.95 v-5 M225.1,168.95 l1.5,-1.8 l1.5,1.8" fill="none" stroke="#b01020" stroke-width="0.9"/>
<path d="M243.75,166.95 v5 M242.25,170.95 l1.5,1.8 l1.5,-1.8" fill="none" stroke="#b01020" stroke-width="0.9"/>
<text transform="translate(201,232.4) scale(0.88,1)" x="0" y="0" font-size="30" font-weight="bold" fill="#d0d0e6" text-anchor="middle">0</text>
<path d="M226.6,221.4 L264.33,221.4" fill="none" stroke="#6e0c18" stroke-width="2.4" stroke-linejoin="miter" stroke-linecap="square"/>
<circle cx="226.6" cy="204.25" r="6.6" fill="url(#dot)" stroke="#ffb0b0" stroke-width="0.6" stroke-opacity="0.6"/>
<circle cx="243.75" cy="204.25" r="6.6" fill="url(#dot)" stroke="#ffb0b0" stroke-width="0.6" stroke-opacity="0.6"/>
<path d="M226.6,207.25 v-5 M225.1,203.25 l1.5,-1.8 l1.5,1.8" fill="none" stroke="#b01020" stroke-width="0.9"/>
<path d="M243.75,201.25 v5 M242.25,205.25 l1.5,1.8 l1.5,-1.8" fill="none" stroke="#b01020" stroke-width="0.9"/>
<text transform="translate(201,266.7) scale(0.88,1)" x="0" y="0" font-size="30" font-weight="bold" fill="#d0d0e6" text-anchor="middle">0</text>
<path d="M226.6,255.7 L264.33,255.7" fill="none" stroke="#6e0c18" stroke-width="2.4" stroke-linejoin="miter" stroke-linecap="square"/>
<circle cx="226.6" cy="238.55" r="6.6" fill="url(#dot)" stroke="#ffb0b0" stroke-width="0.6" stroke-opacity="0.6"/>
<circle cx="243.75" cy="238.55" r="6.6" fill="url(#dot)" stroke="#ffb0b0" stroke-width="0.6" stroke-opacity="0.6"/>
<path d="M226.6,241.55 v-5 M225.1,237.55 l1.5,-1.8 l1.5,1.8" fill="none" stroke="#b01020" stroke-width="0.9"/>
<path d="M243.75,235.55 v5 M242.25,239.55 l1.5,1.8 l1.5,-1.8" fill="none" stroke="#b01020" stroke-width="0.9"/>
<text transform="translate(201,301) scale(0.88,1)" x="0" y="0" font-size="30" font-weight="bold" fill="#d0d0e6" text-anchor="middle">0</text>
<path d="M226.6,290 L264.33,290" fill="none" stroke="#6e0c18" stroke-width="2.4" stroke-linejoin="miter" stroke-linecap="square"/>
<circle cx="226.6" cy="272.85" r="6.6" fill="url(#dot)" stroke="#ffb0b0" stroke-width="0.6" stroke-opacity="0.6"/>
<circle cx="243.75" cy="272.85" r="6.6" fill="url(#dot)" stroke="#ffb0b0" stroke-width="0.6" stroke-opacity="0.6"/>
<path d="M226.6,275.85 v-5 M225.1,271.85 l1.5,-1.8 l1.5,1.8" fill="none" stroke="#b01020" stroke-width="0.9"/>
<path d="M243.75,269.85 v5 M242.25,273.85 l1.5,1.8 l1.5,-1.8" fill="none" stroke="#b01020" stroke-width="0.9"/>
<path d="M586.75,358.6 L621.05,358.6" fill="none" stroke="#6e0c18" stroke-width="2.4" stroke-linejoin="miter" stroke-linecap="square"/>
<path d="M586.75,375.75 L621.05,375.75" fill="none" stroke="#6e0c18" stroke-width="2.4" stroke-linejoin="miter" stroke-linecap="square"/>
<path d="M586.75,392.9 L621.05,392.9" fill="none" stroke="#6e0c18" stroke-width="2.4" stroke-linejoin="miter" stroke-linecap="square"/>
<path d="M586.75,410.05 L621.05,410.05" fill="none" stroke="#6e0c18" stroke-width="2.4" stroke-linejoin="miter" stroke-linecap="square"/>
<path d="M586.75,444.35 L621.05,444.35" fill="none" stroke="#6e0c18" stroke-width="2.4" stroke-linejoin="miter" stroke-linecap="square"/>
<path d="M586.75,461.5 L621.05,461.5" fill="none" stroke="#6e0c18" stroke-width="2.4" stroke-linejoin="miter" stroke-linecap="square"/>
<path d="M586.75,478.65 L621.05,478.65" fill="none" stroke="#6e0c18" stroke-width="2.4" stroke-linejoin="miter" stroke-linecap="square"/>
<path d="M586.75,495.8 L621.05,495.8" fill="none" stroke="#6e0c18" stroke-width="2.4" stroke-linejoin="miter" stroke-linecap="square"/>
<path d="M723.95,358.6 L758.25,358.6" fill="none" stroke="#6e0c18" stroke-width="2.4" stroke-linejoin="miter" stroke-linecap="square"/>
<path d="M723.95,375.75 L758.25,375.75" fill="none" stroke="#6e0c18" stroke-width="2.4" stroke-linejoin="miter" stroke-linecap="square"/>
<path d="M723.95,392.9 L758.25,392.9" fill="none" stroke="#6e0c18" stroke-width="2.4" stroke-linejoin="miter" stroke-linecap="square"/>
<path d="M723.95,410.05 L758.25,410.05" fill="none" stroke="#6e0c18" stroke-width="2.4" stroke-linejoin="miter" stroke-linecap="square"/>
<path d="M723.95,444.35 L758.25,444.35" fill="none" stroke="#6e0c18" stroke-width="2.4" stroke-linejoin="miter" stroke-linecap="square"/>
<path d="M723.95,461.5 L758.25,461.5" fill="none" stroke="#6e0c18" stroke-width="2.4" stroke-linejoin="miter" stroke-linecap="square"/>
<rect x="621.05" y="341.45" width="102.9" height="171.5" fill="#c9c9b1" stroke="#6e0c18" stroke-width="2.4"/>
<circle cx="616.05" cy="478.65" r="4" fill="#e0e0d0" stroke="#6e0c18" stroke-width="2.2"/>
<circle cx="728.95" cy="444.35" r="4" fill="#e0e0d0" stroke="#6e0c18" stroke-width="2.2"/>
<circle cx="728.95" cy="461.5" r="4" fill="#e0e0d0" stroke="#6e0c18" stroke-width="2.2"/>
<text x="620.5" y="335.2" font-size="20" fill="#2e2e2e" text-anchor="start" font-weight="normal" textLength="24" lengthAdjust="spacingAndGlyphs" >U1</text>
<text x="620.5" y="526" font-size="14" fill="#2e2e2e" text-anchor="start" font-weight="normal" textLength="37.4" lengthAdjust="spacingAndGlyphs" >74192</text>
<text x="629.5" y="363.8" font-size="14" fill="#2e2e2e" text-anchor="start" font-weight="normal" >D0</text>
<text x="604" y="355.1" font-size="14" fill="#2e2e2e" text-anchor="end" font-weight="normal" >15</text>
<text x="629.5" y="380.95" font-size="14" fill="#2e2e2e" text-anchor="start" font-weight="normal" >D1</text>
<text x="604" y="372.25" font-size="14" fill="#2e2e2e" text-anchor="end" font-weight="normal" >1</text>
<text x="629.5" y="398.1" font-size="14" fill="#2e2e2e" text-anchor="start" font-weight="normal" >D2</text>
<text x="604" y="389.4" font-size="14" fill="#2e2e2e" text-anchor="end" font-weight="normal" >10</text>
<text x="629.5" y="415.25" font-size="14" fill="#2e2e2e" text-anchor="start" font-weight="normal" >D3</text>
<text x="604" y="406.55" font-size="14" fill="#2e2e2e" text-anchor="end" font-weight="normal" >9</text>
<text x="629.5" y="449.55" font-size="14" fill="#2e2e2e" text-anchor="start" font-weight="normal" >UP</text>
<text x="604" y="440.85" font-size="14" fill="#2e2e2e" text-anchor="end" font-weight="normal" >5</text>
<text x="629.5" y="466.7" font-size="14" fill="#2e2e2e" text-anchor="start" font-weight="normal" >DN</text>
<text x="604" y="458" font-size="14" fill="#2e2e2e" text-anchor="end" font-weight="normal" >4</text>
<text x="629.5" y="483.85" font-size="14" fill="#2e2e2e" text-anchor="start" font-weight="normal" >PL</text>
<text x="604" y="475.15" font-size="14" fill="#2e2e2e" text-anchor="end" font-weight="normal" >11</text>
<text x="629.5" y="501" font-size="14" fill="#2e2e2e" text-anchor="start" font-weight="normal" >MR</text>
<text x="604" y="492.3" font-size="14" fill="#2e2e2e" text-anchor="end" font-weight="normal" >14</text>
<text x="715" y="363.8" font-size="14" fill="#2e2e2e" text-anchor="end" font-weight="normal" >Q0</text>
<text x="740.3" y="355.1" font-size="14" fill="#2e2e2e" text-anchor="start" font-weight="normal" >3</text>
<text x="715" y="380.95" font-size="14" fill="#2e2e2e" text-anchor="end" font-weight="normal" >Q1</text>
<text x="740.3" y="372.25" font-size="14" fill="#2e2e2e" text-anchor="start" font-weight="normal" >2</text>
<text x="715" y="398.1" font-size="14" fill="#2e2e2e" text-anchor="end" font-weight="normal" >Q2</text>
<text x="740.3" y="389.4" font-size="14" fill="#2e2e2e" text-anchor="start" font-weight="normal" >6</text>
<text x="715" y="415.25" font-size="14" fill="#2e2e2e" text-anchor="end" font-weight="normal" >Q3</text>
<text x="740.3" y="406.55" font-size="14" fill="#2e2e2e" text-anchor="start" font-weight="normal" >7</text>
<text x="715" y="449.55" font-size="14" fill="#2e2e2e" text-anchor="end" font-weight="normal" >TCU</text>
<text x="740.3" y="440.85" font-size="14" fill="#2e2e2e" text-anchor="start" font-weight="normal" >12</text>
<text x="715" y="466.7" font-size="14" fill="#2e2e2e" text-anchor="end" font-weight="normal" >TCD</text>
<text x="740.3" y="458" font-size="14" fill="#2e2e2e" text-anchor="start" font-weight="normal" >13</text>
<path d="M964.05,247.6 L964.05,264.27" fill="none" stroke="#6e0c18" stroke-width="2.4" stroke-linejoin="miter" stroke-linecap="square"/>
<path d="M989.77,247.6 L989.77,264.27" fill="none" stroke="#6e0c18" stroke-width="2.4" stroke-linejoin="miter" stroke-linecap="square"/>
<path d="M1015.5,247.6 L1015.5,264.27" fill="none" stroke="#6e0c18" stroke-width="2.4" stroke-linejoin="miter" stroke-linecap="square"/>
<path d="M1041.22,247.6 L1041.22,264.27" fill="none" stroke="#6e0c18" stroke-width="2.4" stroke-linejoin="miter" stroke-linecap="square"/>
<rect x="946.3" y="92" width="113.1" height="155.6" fill="#3c0004" stroke="#8a0c1c" stroke-width="1.6"/>
<path d="M979,101.5 L1030,101.5 L1034,106 L1029.5,111.3 L980.5,111.3 L975.5,106z" fill="#161c8e" stroke="#161c8e" stroke-width="0.5" stroke-linejoin="round"/>
<path d="M973.5,108.5 L980,113.5 L977,157.5 L971.5,163 L966.5,158 L968.5,113z" fill="#161c8e" stroke="#161c8e" stroke-width="0.5" stroke-linejoin="round"/>
<path d="M1035.5,108.5 L1040,113 L1038.5,158 L1033.5,163 L1027.5,157.5 L1030,113.5z" fill="#161c8e" stroke="#161c8e" stroke-width="0.5" stroke-linejoin="round"/>
<path d="M976.5,158.8 L1027.5,158.8 L1032.5,164 L1027,169.2 L976,169.2 L971,164z" fill="#161c8e" stroke="#161c8e" stroke-width="0.5" stroke-linejoin="round"/>
<path d="M969.5,166 L975.5,171 L973.5,216.5 L967.5,222 L963,217 L965,171z" fill="#161c8e" stroke="#161c8e" stroke-width="0.5" stroke-linejoin="round"/>
<path d="M1032.5,166 L1037.5,171 L1035.5,217 L1030.5,222 L1024.5,216.5 L1027,171z" fill="#161c8e" stroke="#161c8e" stroke-width="0.5" stroke-linejoin="round"/>
<path d="M973.5,218 L1025,218 L1030,223.3 L1025,228.5 L973,228.5 L968.5,223.3z" fill="#161c8e" stroke="#161c8e" stroke-width="0.5" stroke-linejoin="round"/>
<path d="M1015.5,495.8 L1015.5,530.1" fill="none" stroke="#6e0c18" stroke-width="2.4" stroke-linejoin="miter" stroke-linecap="square"/>
<path d="M1032.65,495.8 L1032.65,530.1" fill="none" stroke="#6e0c18" stroke-width="2.4" stroke-linejoin="miter" stroke-linecap="square"/>
<path d="M1049.8,495.8 L1049.8,530.1" fill="none" stroke="#6e0c18" stroke-width="2.4" stroke-linejoin="miter" stroke-linecap="square"/>
<path d="M998.35,530.1 H1066.95 V602.5 A34.3,28.5 0 0 1 998.35,602.5 Z" fill="#c9c9b1" stroke="#6e0c18" stroke-width="2.2"/>
<path d="M1032.65,643 V659.5" stroke="#6e0c18" stroke-width="2"/>
<circle cx="1032.65" cy="637.8" r="4.2" fill="#e0e0d0" stroke="#6e0c18" stroke-width="2"/>
<text x="1078" y="547" font-size="20" fill="#222" text-anchor="start" font-weight="normal" textLength="25" lengthAdjust="spacingAndGlyphs" >U2</text>
<text x="1078" y="566.7" font-size="13" fill="#333" text-anchor="start" font-weight="normal" textLength="53.7" lengthAdjust="spacingAndGlyphs" >NAND_3</text>
<path d="M878.5,523.2 q4.5,2 6.5,6.5 q-2,4.5 -6.5,6.5 q-4.5,-2 -6.5,-6.5 q2,-4.5 6.5,-6.5z" fill="#ece8f8" fill-opacity="0.7" stroke="#30288a" stroke-width="0.9"/>
<path d="M878.5,521 v18 M872,529.7 h13" stroke="#2a2080" stroke-width="1.3"/>
</svg>
<rect x="172.0" y="96.0" width="1103.0" height="558.5" fill="none" stroke="#60706a" stroke-width="1"/>
<rect x="0" y="655" width="1280" height="26" fill="url(#sbg)"/>
<rect x="4" y="658" width="1" height="1" fill="#8aa0b0"/>
<rect x="251" y="658" width="1" height="1" fill="#8aa0b0"/>
<rect x="642" y="658" width="1" height="1" fill="#8aa0b0"/>
<rect x="4" y="661" width="1" height="1" fill="#8aa0b0"/>
<rect x="251" y="661" width="1" height="1" fill="#8aa0b0"/>
<rect x="642" y="661" width="1" height="1" fill="#8aa0b0"/>
<rect x="4" y="664" width="1" height="1" fill="#8aa0b0"/>
<rect x="251" y="664" width="1" height="1" fill="#8aa0b0"/>
<rect x="642" y="664" width="1" height="1" fill="#8aa0b0"/>
<rect x="4" y="667" width="1" height="1" fill="#8aa0b0"/>
<rect x="251" y="667" width="1" height="1" fill="#8aa0b0"/>
<rect x="642" y="667" width="1" height="1" fill="#8aa0b0"/>
<rect x="4" y="670" width="1" height="1" fill="#8aa0b0"/>
<rect x="251" y="670" width="1" height="1" fill="#8aa0b0"/>
<rect x="642" y="670" width="1" height="1" fill="#8aa0b0"/>
<rect x="4" y="673" width="1" height="1" fill="#8aa0b0"/>
<rect x="251" y="673" width="1" height="1" fill="#8aa0b0"/>
<rect x="642" y="673" width="1" height="1" fill="#8aa0b0"/>
<rect x="4" y="676" width="1" height="1" fill="#8aa0b0"/>
<rect x="251" y="676" width="1" height="1" fill="#8aa0b0"/>
<rect x="642" y="676" width="1" height="1" fill="#8aa0b0"/>
<rect x="4" y="679" width="1" height="1" fill="#8aa0b0"/>
<rect x="251" y="679" width="1" height="1" fill="#8aa0b0"/>
<rect x="642" y="679" width="1" height="1" fill="#8aa0b0"/>
<line x1="243.5" y1="656" x2="243.5" y2="680" stroke="#f4f8fa" stroke-width="1"/>
<line x1="632.5" y1="656" x2="632.5" y2="680" stroke="#f4f8fa" stroke-width="1"/>
<path d="M23.5,661 v13.5 l7,-6.75z" fill="#1e5eb0"/>
<rect x="56" y="661" width="2" height="13.5" fill="#1e5eb0"/><path d="M59.5,661 v13.5 l7,-6.75z" fill="#1e5eb0"/>
<rect x="91" y="661" width="2.5" height="13.5" fill="#1e5eb0"/><rect x="96" y="661" width="2.5" height="13.5" fill="#1e5eb0"/>
<rect x="123" y="662" width="12.5" height="12" fill="#1e5eb0"/>
<line x1="148.5" y1="659" x2="148.5" y2="677" stroke="#c0ccd4" stroke-width="1"/>
<circle cx="167.5" cy="668" r="6" fill="#d01830"/><path d="M164.8,665.3 l5.4,5.4 M170.2,665.3 l-5.4,5.4" stroke="#fff" stroke-width="1.8"/>
<text x="188" y="672.5" font-size="10.5" fill="#e04070" text-anchor="start" font-weight="normal" textLength="39.5" lengthAdjust="spacingAndGlyphs" >2 Error(s)</text>
<text x="258.7" y="672.5" font-size="10.5" fill="#4a5058" text-anchor="start" font-weight="normal" textLength="178" lengthAdjust="spacingAndGlyphs" >Shows the currently loaded components.</text>
</svg>
</body></html>
